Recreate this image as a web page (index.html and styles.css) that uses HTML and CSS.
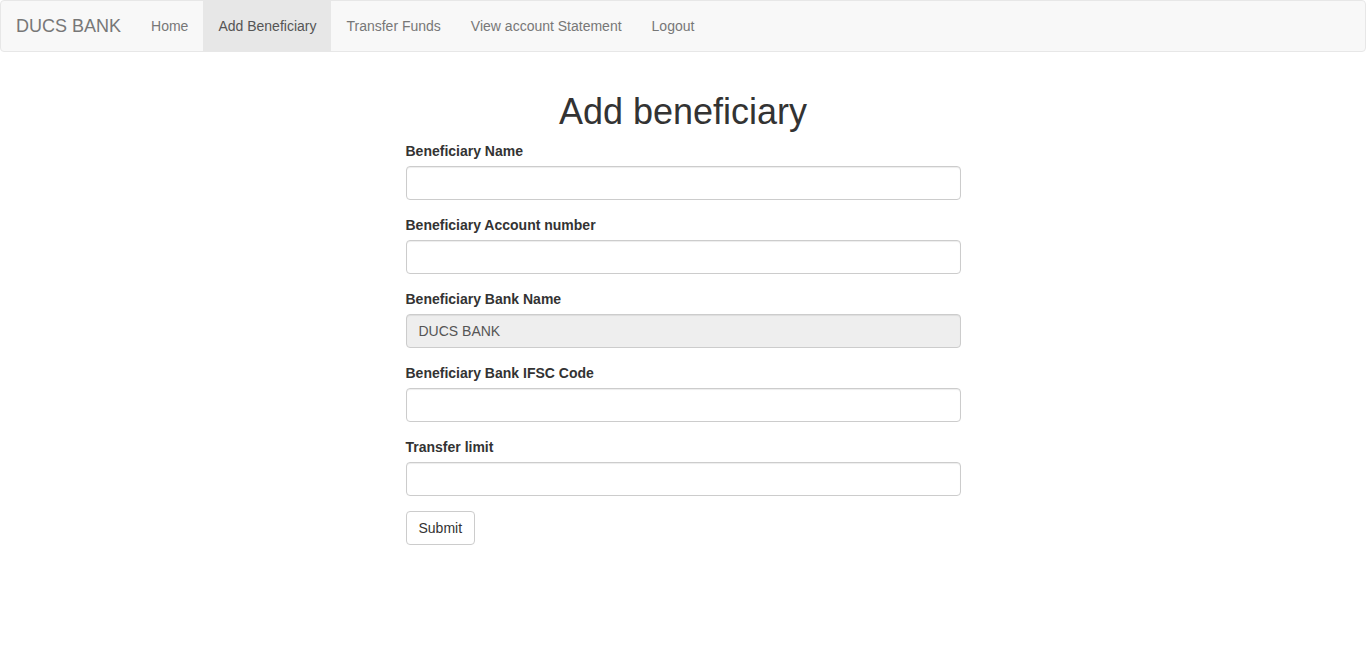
FILE: index.html
```html
<!DOCTYPE html>
<html>
<head>
<meta charset="utf-8">
<title>Add beneficiary</title>
<link rel="stylesheet" href="styles.css">
</head>
<body>
<nav class="navbar">
  <a class="brand" href="#">DUCS BANK</a>
  <ul class="nav">
    <li><a href="#">Home</a></li>
    <li class="active"><a href="#">Add Beneficiary</a></li>
    <li><a href="#">Transfer Funds</a></li>
    <li><a href="#">View account Statement</a></li>
    <li><a href="#">Logout</a></li>
  </ul>
</nav>
<main class="container">
  <div class="col">
    <h1 class="title">Add beneficiary</h1>
    <form class="form">
      <div class="form-group">
        <label>Beneficiary Name</label>
        <input class="form-control" type="text">
      </div>
      <div class="form-group">
        <label>Beneficiary Account number</label>
        <input class="form-control" type="text">
      </div>
      <div class="form-group">
        <label>Beneficiary Bank Name</label>
        <input class="form-control" type="text" value="DUCS BANK" readonly>
      </div>
      <div class="form-group">
        <label>Beneficiary Bank IFSC Code</label>
        <input class="form-control" type="text">
      </div>
      <div class="form-group">
        <label>Transfer limit</label>
        <input class="form-control" type="text">
      </div>
      <button type="button" class="btn">Submit</button>
    </form>
  </div>
</main>
</body>
</html>
```

FILE: styles.css
```css
* { box-sizing: border-box; }
html, body { margin: 0; padding: 0; }
body {
  font-family: "Liberation Sans", Arial, Helvetica, sans-serif;
  font-size: 14px;
  line-height: 1.42857143;
  color: #333;
  background: #fff;
}
.navbar {
  display: flex;
  align-items: stretch;
  min-height: 52px;
  background: #f8f8f8;
  border: 1px solid #e7e7e7;
  border-radius: 4px;
  margin-bottom: 20px;
}
.brand {
  display: block;
  height: 50px;
  padding: 15px;
  font-size: 18px;
  line-height: 20px;
  color: #777;
  text-decoration: none;
}
.nav {
  display: flex;
  list-style: none;
  margin: 0;
  padding: 0;
}
.nav a {
  display: block;
  padding: 15px;
  line-height: 20px;
  color: #777;
  text-decoration: none;
}
.nav .active a {
  background: #e7e7e7;
  color: #555;
}
.container {
  width: 1170px;
  margin: 0 auto;
  padding: 0 15px;
}
.col {
  display: flow-root;
  width: 555px;
  margin-left: 292.5px;
}
.title {
  margin: 20px 0 10px;
  font-size: 36px;
  font-weight: 500;
  line-height: 39px;
  text-align: center;
  color: #333;
}
.form-group { margin-bottom: 15px; }
label {
  display: block;
  margin-bottom: 5px;
  font-weight: bold;
}
.form-control {
  display: block;
  width: 100%;
  height: 34px;
  padding: 6px 12px;
  font-family: inherit;
  font-size: 14px;
  line-height: 1.42857143;
  color: #555;
  background: #fff;
  border: 1px solid #ccc;
  border-radius: 4px;
  box-shadow: inset 0 1px 1px rgba(0,0,0,.075);
  outline: none;
}
.form-control[readonly] {
  background: #eee;
}
.btn {
  display: inline-block;
  padding: 6px 12px;
  font-family: inherit;
  font-size: 14px;
  line-height: 1.42857143;
  color: #333;
  background: #fff;
  border: 1px solid #ccc;
  border-radius: 4px;
  cursor: pointer;
}
```
